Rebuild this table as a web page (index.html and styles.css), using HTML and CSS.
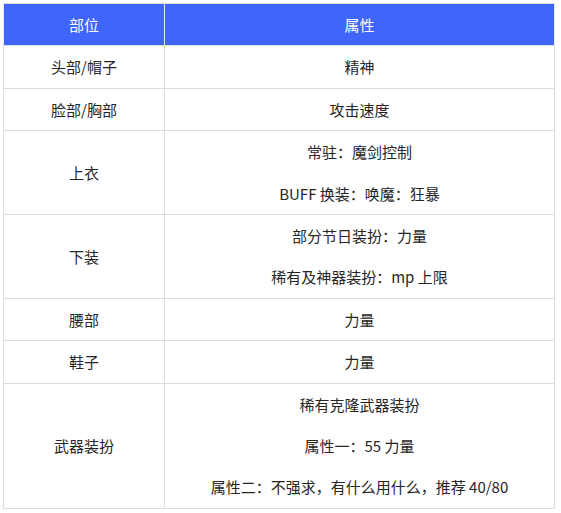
FILE: index.html
```html
<!DOCTYPE html>
<html lang="zh-CN">
<head>
<meta charset="utf-8">
<title>部位属性</title>
<link rel="stylesheet" href="styles.css">
</head>
<body>
<div class="wrap">
<table class="attr-table">
  <thead>
    <tr><th class="col-part">部位</th><th>属性</th></tr>
  </thead>
  <tbody>
    <tr><td>头部/帽子</td><td><p>精神</p></td></tr>
    <tr><td>脸部/胸部</td><td><p>攻击速度</p></td></tr>
    <tr><td>上衣</td><td><p>常驻：魔剑控制</p><p>BUFF 换装：唤魔：狂暴</p></td></tr>
    <tr><td>下装</td><td><p>部分节日装扮：力量</p><p>稀有及神器装扮：mp 上限</p></td></tr>
    <tr><td>腰部</td><td><p>力量</p></td></tr>
    <tr><td>鞋子</td><td><p>力量</p></td></tr>
    <tr><td>武器装扮</td><td><p>稀有克隆武器装扮</p><p>属性一：55 力量</p><p>属性二：不强求，有什么用什么，推荐 40/80</p></td></tr>
  </tbody>
</table>
</div>
</body>
</html>
```

FILE: styles.css
```css
html, body {
  margin: 0;
  padding: 0;
  background: #ffffff;
}
.wrap {
  padding: 3px 0 0 3px;
}
.attr-table {
  width: 552px;
  border-collapse: collapse;
  table-layout: fixed;
  font-family: "Noto Sans CJK SC", "Microsoft YaHei", "Noto Sans", sans-serif;
  font-size: 15px;
  color: #262626;
}
.attr-table th,
.attr-table td {
  border: 1px solid #dcdcdc;
  text-align: center;
  vertical-align: middle;
  padding: 0;
  line-height: 21.4px;
}
.attr-table th {
  background: #3f65fa;
  color: #ffffff;
  font-weight: normal;
  padding: 10px 0;
  border-color: #dcdcdc #e4e9fb;
}
.attr-table td {
  height: 41px;
}
.col-part {
  width: 160px;
}
.attr-table td p {
  margin: 0;
  padding: 10px 0;
}
```
